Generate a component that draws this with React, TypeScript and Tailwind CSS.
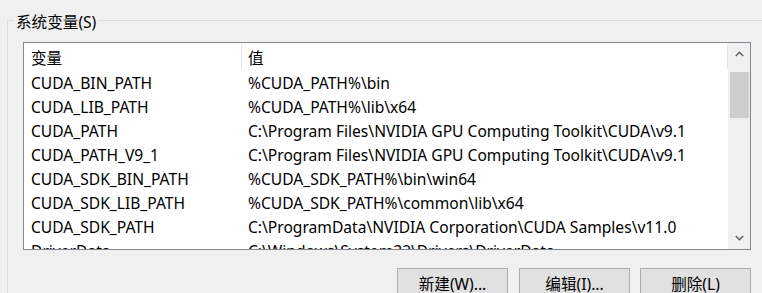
import React from "react";

const rows: [string, string][] = [
  ["CUDA_BIN_PATH", "%CUDA_PATH%\\bin"],
  ["CUDA_LIB_PATH", "%CUDA_PATH%\\lib\\x64"],
  ["CUDA_PATH", "C:\\Program Files\\NVIDIA GPU Computing Toolkit\\CUDA\\v9.1"],
  ["CUDA_PATH_V9_1", "C:\\Program Files\\NVIDIA GPU Computing Toolkit\\CUDA\\v9.1"],
  ["CUDA_SDK_BIN_PATH", "%CUDA_SDK_PATH%\\bin\\win64"],
  ["CUDA_SDK_LIB_PATH", "%CUDA_SDK_PATH%\\common\\lib\\x64"],
  ["CUDA_SDK_PATH", "C:\\ProgramData\\NVIDIA Corporation\\CUDA Samples\\v11.0"],
  ["DriverData", "C:\\Windows\\System32\\Drivers\\DriverData"],
];

function Chevron({ up }: { up?: boolean }) {
  return (
    <svg width="9" height="6" viewBox="0 0 9 6" className="block">
      <path
        d={up ? "M0.8 5 L4.5 1.3 L8.2 5" : "M0.8 1 L4.5 4.7 L8.2 1"}
        fill="none"
        stroke="#606060"
        strokeWidth="1.6"
      />
    </svg>
  );
}

export default function App() {
  return (
    <div
      className="w-[762px] h-[293px] overflow-hidden bg-[#f0f0f0] pt-[20px] pl-[7px] text-black"
      style={{ fontFamily: '"Noto Sans", "Noto Sans CJK SC", sans-serif' }}
    >
      <div className="relative w-[780px] border-l border-t border-[#dcdcdc] pl-[15px] pt-[21px]">
        <div className="absolute left-[6px] top-[-9px] px-[2px] bg-[#f0f0f0] text-[15.6px] leading-[20px]">
          系统变量(S)
        </div>
        <div className="w-[728px] h-[208px] border border-[#828790] bg-white flex">
          <div className="w-[704px] overflow-hidden text-[15.6px]">
            <div className="h-[27px] flex">
              <div className="w-[218px] border-r border-[#e5e5e5] pl-[7px] pt-[4px] flex items-center my-[1px]">
                变量
              </div>
              <div className="flex-1 border-r border-[#e5e5e5] pl-[6px] pt-[4px] flex items-center my-[1px]">
                值
              </div>
            </div>
            {rows.map(([k, v]) => (
              <div key={k} className="h-[24px] pt-[4px] flex items-center whitespace-nowrap">
                <div className="w-[218px] shrink-0 pl-[7px]">{k}</div>
                <div className="pl-[6px]">{v}</div>
              </div>
            ))}
          </div>
          <div className="w-[22px] bg-[#f0f0f0] flex flex-col">
            <div className="h-[22px] flex items-center justify-center">
              <Chevron up />
            </div>
            <div className="flex-1">
              <div className="mt-[7px] ml-[2px] w-[19px] h-[46px] bg-[#cdcdcd]" />
            </div>
            <div className="h-[22px] flex items-center justify-center">
              <Chevron />
            </div>
          </div>
        </div>
        <div className="w-[728px] mt-[18px] flex justify-end gap-[10px] text-[15.6px]">
          <button className="mr-[1px] w-[111px] h-[30px] pt-[3px] border border-[#adadad] bg-[#e1e1e1]">
            新建(W)...
          </button>
          <button className="w-[111px] h-[30px] pt-[3px] border border-[#adadad] bg-[#e1e1e1]">
            编辑(I)...
          </button>
          <button className="w-[111px] h-[30px] pt-[3px] border border-[#adadad] bg-[#e1e1e1]">
            删除(L)
          </button>
        </div>
      </div>
    </div>
  );
}
